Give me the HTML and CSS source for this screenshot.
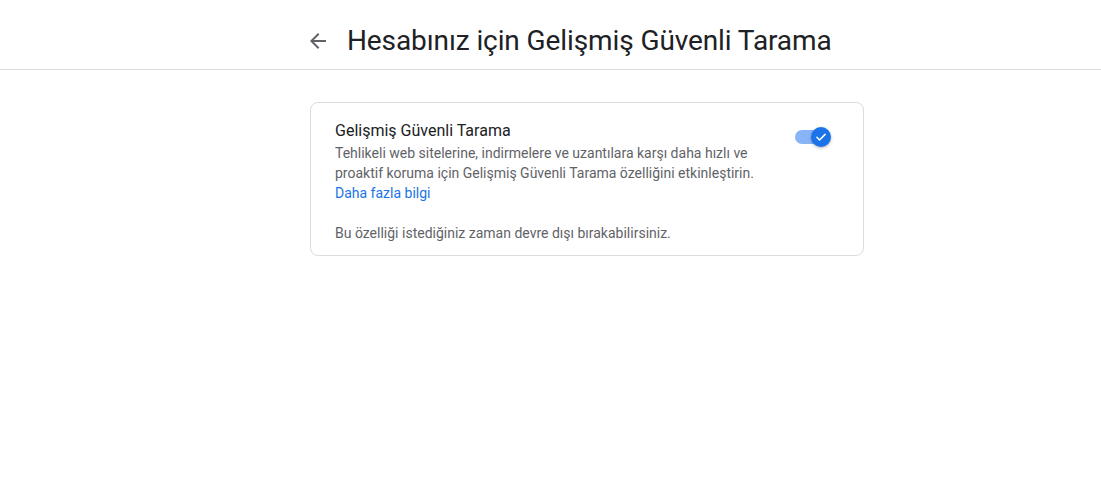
FILE: index.html
```html
<!DOCTYPE html>
<html lang="tr">
<head>
<meta charset="utf-8">
<link rel="stylesheet" href="styles.css">
</head>
<body>
<header class="topbar">
  <div class="topbar-inner">
    <button class="back" aria-label="Geri">
      <svg viewBox="0 0 24 24" width="24" height="24"><path d="M20 11H7.83l5.59-5.59L12 4l-8 8 8 8 1.41-1.41L7.83 13H20v-2z" fill="#5f6368"/></svg>
    </button>
    <h1 class="title">Hesabınız için Gelişmiş Güvenli Tarama</h1>
  </div>
</header>
<main class="main">
  <section class="card">
    <div class="card-row">
      <div class="card-text">
        <div class="card-title">Gelişmiş Güvenli Tarama</div>
        <p class="desc">Tehlikeli web sitelerine, indirmelere ve uzantılara karşı daha hızlı ve proaktif koruma için Gelişmiş Güvenli Tarama özelliğini etkinleştirin. <br><a class="link" href="#">Daha fazla bilgi</a></p>
      </div>
      <div class="toggle">
        <span class="track"></span>
        <span class="knob">
          <svg viewBox="0 0 24 24" width="14" height="14"><path d="M5 12.5l4.5 4.5L19 7.5" fill="none" stroke="#fff" stroke-width="2.6" stroke-linecap="round" stroke-linejoin="round"/></svg>
        </span>
      </div>
    </div>
    <p class="note">Bu özelliği istediğiniz zaman devre dışı bırakabilirsiniz.</p>
  </section>
</main>
</body>
</html>
```
FILE: styles.css
```css
* { box-sizing: border-box; }
html, body { margin: 0; padding: 0; background: #fff; }
body { font-family: Roboto, "Open Sans", Arial, sans-serif; color: #202124; }

.topbar {
  height: 70px;
  border-bottom: 1px solid #dadce0;
}
.topbar-inner {
  margin-left: 306px;
  display: flex;
  align-items: center;
  height: 69px;
  padding-top: 23px;
  padding-bottom: 10px;
}
.back {
  border: 0;
  background: none;
  padding: 0;
  width: 24px;
  height: 24px;
  margin-right: 17px;
  display: flex;
  align-items: center;
  justify-content: center;
  cursor: pointer;
}
.title {
  margin: 0;
  font-size: 28px;
  font-weight: 400;
  line-height: 36px;
  color: #202124;
  letter-spacing: -0.1px;
}

.main {
  padding-top: 32px;
  margin-left: 310px;
}
.card {
  width: 554px;
  border: 1px solid #dadce0;
  border-radius: 8px;
  padding: 16px 24px 12px 24px;
}
.card-row {
  display: flex;
  align-items: flex-start;
}
.card-text {
  width: 440px;
}
.card-title {
  font-size: 16px;
  line-height: 24px;
  color: #202124;
}
.desc, .note {
  margin: 0;
  font-size: 14px;
  line-height: 20px;
  color: #5f6368;
}
.note { margin-top: 20px; }
.link { color: #1a73e8; text-decoration: none; }

.toggle {
  margin-left: 20px;
  margin-top: 6px;
  position: relative;
  width: 38px;
  height: 24px;
  display: flex;
  align-items: center;
}
.track {
  display: block;
  width: 30px;
  height: 14px;
  border-radius: 7px;
  background: #8ab4f8;
}
.knob {
  position: absolute;
  left: 16px;
  top: 2px;
  width: 20px;
  height: 20px;
  border-radius: 50%;
  background: #1a73e8;
  display: flex;
  align-items: center;
  justify-content: center;
  box-shadow: 0 1px 3px rgba(0,0,0,0.3);
}
```
